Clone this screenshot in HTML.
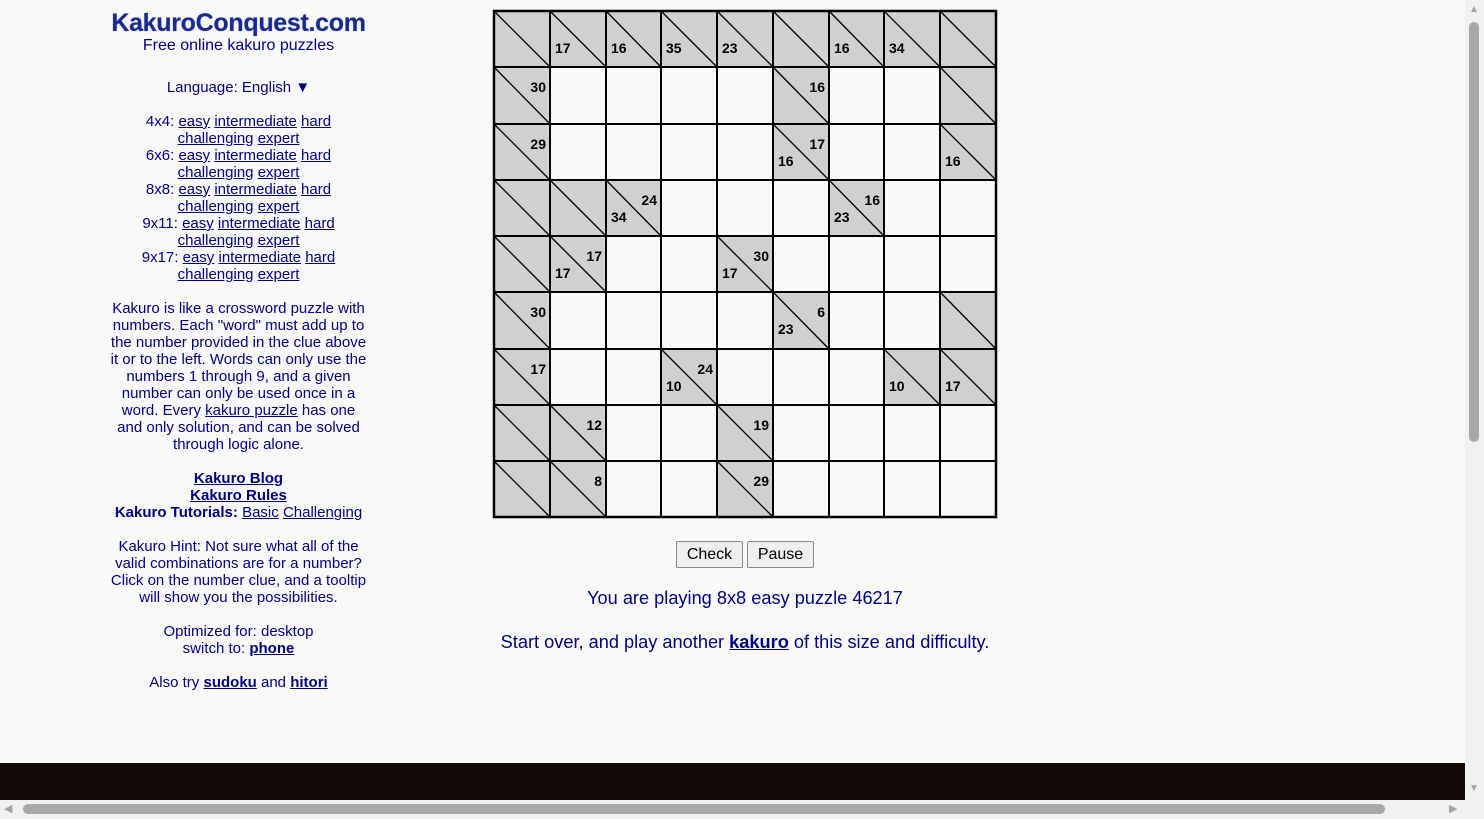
<!DOCTYPE html>
<html><head><meta charset="utf-8"><style>
body{margin:0;background:#f9f9f9;font-family:"Liberation Sans",Arial,sans-serif;color:#000080;width:1484px;height:819px;overflow:hidden;position:relative}
a{color:#000080}
#left{position:absolute;left:108px;top:8px;width:261px;text-align:center;font-size:15px;line-height:17px}
#left p{margin:0}
h1{margin:0;font-size:25px;line-height:30px;color:#1a2a8a;letter-spacing:-0.3px;text-shadow:0 0 1px #6a7ad0}
svg text{font:bold 14px "Liberation Sans",Arial,sans-serif;fill:#000}
.btn{position:absolute;top:541px;height:25px;border:1px solid #8a8a8a;border-radius:2px;background:#efefef;color:#000;font-size:16px;line-height:25px;text-align:center}
.c{position:absolute;left:494px;width:502px;text-align:center;font-size:18.2px}
</style></head><body>
<div id="left">
<h1>KakuroConquest.com</h1>
<p style="font-size:16px;margin-top:-1px">Free online kakuro puzzles</p>
<p style="margin-top:25px">Language: English ▼</p>
<p style="margin-top:17px">4x4: <a href="#">easy</a> <a href="#">intermediate</a> <a href="#">hard</a><br><a href="#">challenging</a> <a href="#">expert</a><br>
6x6: <a href="#">easy</a> <a href="#">intermediate</a> <a href="#">hard</a><br><a href="#">challenging</a> <a href="#">expert</a><br>
8x8: <a href="#">easy</a> <a href="#">intermediate</a> <a href="#">hard</a><br><a href="#">challenging</a> <a href="#">expert</a><br>
9x11: <a href="#">easy</a> <a href="#">intermediate</a> <a href="#">hard</a><br><a href="#">challenging</a> <a href="#">expert</a><br>
9x17: <a href="#">easy</a> <a href="#">intermediate</a> <a href="#">hard</a><br><a href="#">challenging</a> <a href="#">expert</a></p>
<p style="margin-top:17px">Kakuro is like a crossword puzzle with numbers. Each "word" must add up to the number provided in the clue above it or to the left. Words can only use the numbers 1 through 9, and a given number can only be used once in a word. Every <a href="#">kakuro puzzle</a> has one and only solution, and can be solved through logic alone.</p>
<p style="margin-top:17px;font-weight:bold"><a href="#">Kakuro Blog</a><br><a href="#">Kakuro Rules</a><br>Kakuro Tutorials: <a href="#" style="font-weight:normal">Basic</a> <a href="#" style="font-weight:normal">Challenging</a></p>
<p style="margin-top:17px">Kakuro Hint: Not sure what all of the valid combinations are for a number? Click on the number clue, and a tooltip will show you the possibilities.</p>
<p style="margin-top:17px">Optimized for: desktop<br>switch to: <a href="#"><b>phone</b></a></p>
<p style="margin-top:17px">Also try <a href="#"><b>sudoku</b></a> and <a href="#"><b>hitori</b></a></p>
</div>

<svg width="1484" height="819" style="position:absolute;left:0;top:0">
<g fill="#d0d0d0">
<rect x="494" y="11" width="502" height="56"/>
<rect x="494" y="67" width="56" height="450"/>
<rect x="773" y="67" width="56" height="113"/>
<rect x="940" y="67" width="56" height="113"/>
<rect x="550" y="180" width="111" height="56"/>
<rect x="829" y="180" width="55" height="56"/>
<rect x="550" y="236" width="56" height="56"/>
<rect x="717" y="236" width="56" height="56"/>
<rect x="773" y="292" width="56" height="57"/>
<rect x="940" y="292" width="56" height="57"/>
<rect x="661" y="349" width="56" height="56"/>
<rect x="884" y="349" width="112" height="56"/>
<rect x="550" y="405" width="56" height="112"/>
<rect x="717" y="405" width="56" height="112"/>
</g>
<path stroke="#000" stroke-width="1.3" fill="none" d="
M494 11L550 67M550 11L606 67M606 11L661 67M661 11L717 67M717 11L773 67M773 11L829 67M829 11L884 67M884 11L940 67M940 11L996 67
M494 67L550 124M773 67L829 124M940 67L996 124
M494 124L550 180M773 124L829 180M940 124L996 180
M494 180L550 236M550 180L606 236M606 180L661 236M829 180L884 236
M494 236L550 292M550 236L606 292M717 236L773 292
M494 292L550 349M773 292L829 349M940 292L996 349
M494 349L550 405M661 349L717 405M884 349L940 405M940 349L996 405
M494 405L550 461M550 405L606 461M717 405L773 461
M494 461L550 517M550 461L606 517M717 461L773 517"/>
<path stroke="#000" stroke-width="2" fill="none" d="
M550 11V517M606 11V517M661 11V517M717 11V517M773 11V517M829 11V517M884 11V517M940 11V517
M494 67H996M494 124H996M494 180H996M494 236H996M494 292H996M494 349H996M494 405H996M494 461H996"/>
<rect x="494" y="11" width="502" height="506" fill="none" stroke="#000" stroke-width="2.5"/>
<text x="555" y="53">17</text><text x="611" y="53">16</text><text x="666" y="53">35</text><text x="722" y="53">23</text><text x="834" y="53">16</text><text x="889" y="53">34</text>
<g text-anchor="end">
<text x="546" y="92">30</text><text x="825" y="92">16</text>
<text x="546" y="149">29</text><text x="825" y="149">17</text>
<text x="657" y="205">24</text><text x="880" y="205">16</text>
<text x="602" y="261">17</text><text x="769" y="261">30</text>
<text x="546" y="317">30</text><text x="825" y="317">6</text>
<text x="546" y="374">17</text><text x="713" y="374">24</text>
<text x="602" y="430">12</text><text x="769" y="430">19</text>
<text x="602" y="486">8</text><text x="769" y="486">29</text>
</g>
<text x="778" y="166">16</text><text x="945" y="166">16</text>
<text x="611" y="222">34</text><text x="834" y="222">23</text>
<text x="555" y="278">17</text><text x="722" y="278">17</text>
<text x="778" y="334">23</text>
<text x="666" y="391">10</text><text x="889" y="391">10</text><text x="945" y="391">17</text>
</svg>

<div class="btn" style="left:676px;width:65px">Check</div>
<div class="btn" style="left:747px;width:65px">Pause</div>
<div class="c" style="top:588px">You are playing 8x8 easy puzzle 46217</div>
<div class="c" style="top:632px">Start over, and play another <a href="#"><b>kakuro</b></a> of this size and difficulty.</div>

<div style="position:absolute;left:0;top:763px;width:1465px;height:37px;background:#140a08"></div>
<div style="position:absolute;left:1465px;top:0;width:19px;height:819px;background:#f1f1f1"></div>
<div style="position:absolute;left:1469px;top:22px;width:10px;height:420px;background:#a8a8a8;border-radius:5px"></div>
<div style="position:absolute;left:1469px;top:4px;color:#a3a3a3;font-size:10px">▲</div>
<div style="position:absolute;left:1469px;top:783px;color:#a3a3a3;font-size:10px">▼</div>
<div style="position:absolute;left:0;top:800px;width:1465px;height:19px;background:#f1f1f1"></div>
<div style="position:absolute;left:23px;top:804px;width:1362px;height:10px;background:#a8a8a8;border-radius:5px"></div>
<div style="position:absolute;left:4px;top:802px;color:#a3a3a3;font-size:11px">◀</div>
<div style="position:absolute;left:1449px;top:802px;color:#a3a3a3;font-size:11px">▶</div>
</body></html>
